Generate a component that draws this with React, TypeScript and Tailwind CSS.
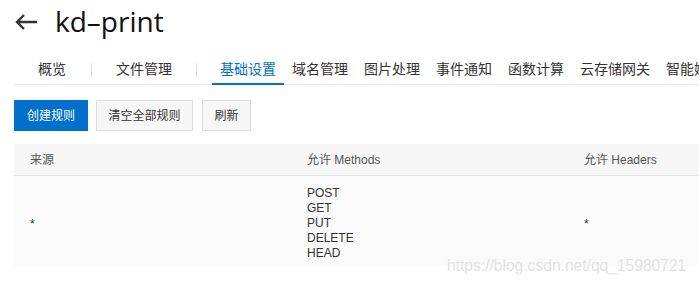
import React from "react";

const cjk = { fontFamily: '"Liberation Sans", "Noto Sans CJK SC", sans-serif' };

export default function App() {
  const tabs = ["域名管理", "图片处理", "事件通知", "函数计算", "云存储网关", "智能媒体"];
  return (
    <div className="relative w-[699px] h-[283px] overflow-hidden bg-white" style={cjk}>
      {/* Title */}
      <div className="h-[55px] flex items-start pl-[14px] pt-[3px]">
        <svg width="24" height="18" viewBox="0 0 24 18" className="mt-[10px]">
          <path d="M23 9H3M10 2L3 9l7 7" fill="none" stroke="#333" strokeWidth="2.4" />
        </svg>
        <span
          className="ml-[17px] text-[28px] leading-[36px] text-[#111]"
          style={{ fontFamily: '"Open Sans", "Noto Sans", sans-serif' }}
        >
          kd–print
        </span>
      </div>

      {/* Tabs */}
      <div className="ml-[14px] h-[30px] flex items-stretch border-b border-[#e3e3e3] whitespace-nowrap">
        <div className="pl-[24px] pr-[25px] flex items-center text-[14px] text-[#333]">概览</div>
        <div className="flex items-center"><div className="w-px h-[13px] bg-[#dcdcdc]" /></div>
        <div className="pl-[24px] pr-[24px] flex items-center text-[14px] text-[#333]">文件管理</div>
        <div className="flex items-center"><div className="w-px h-[13px] bg-[#dcdcdc]" /></div>
        <div className="ml-[15px] px-2 flex items-center text-[14px] text-[#0070cc] border-b-2 border-[#0070cc] -mb-px">基础设置</div>
        {tabs.map((t) => (
          <div key={t} className="px-2 flex items-center text-[14px] text-[#333]">{t}</div>
        ))}
      </div>

      {/* Buttons */}
      <div className="ml-[14px] mt-[15px] flex items-center h-[31px] text-[12px]">
        <div className="w-[74px] h-[31px] flex items-center justify-center bg-[#0070cc] text-white">创建规则</div>
        <div className="ml-[8px] w-[97px] h-[31px] flex items-center justify-center bg-[#f7f7f7] border border-[#dcdcdc] text-[#333]">清空全部规则</div>
        <div className="ml-[9px] w-[49px] h-[31px] flex items-center justify-center bg-[#f7f7f7] border border-[#dcdcdc] text-[#333]">刷新</div>
      </div>

      {/* Table */}
      <div className="ml-[14px] mt-[13px] text-[12px]">
        <div className="h-[32px] flex items-center bg-[#f7f7f7] border-b border-[#e3e3e3] text-[#555] pt-px">
          <div className="w-[277px] pl-[16px]">来源</div>
          <div className="w-[277px] pl-[16px]">允许 Methods</div>
          <div className="pl-[16px]">允许 Headers</div>
        </div>
        <div className="flex items-center bg-[#fafafa] pt-[10px] pb-[5px] text-[#333]">
          <div className="w-[277px] pl-[16px]">*</div>
          <div className="w-[277px] pl-[16px] leading-[15px]">
            <div>POST</div>
            <div>GET</div>
            <div>PUT</div>
            <div>DELETE</div>
            <div>HEAD</div>
          </div>
          <div className="pl-[16px]">*</div>
        </div>
      </div>

      {/* Watermark */}
      <div
        className="absolute left-[447px] top-[254px] text-[15.6px] text-[#e2e2e2] whitespace-nowrap"
        style={{ fontFamily: '"Liberation Sans", sans-serif', textShadow: "0 0 1px rgba(255,255,255,0.8)" }}
      >
        https://blog.csdn.net/qq_15980721
      </div>
    </div>
  );
}
